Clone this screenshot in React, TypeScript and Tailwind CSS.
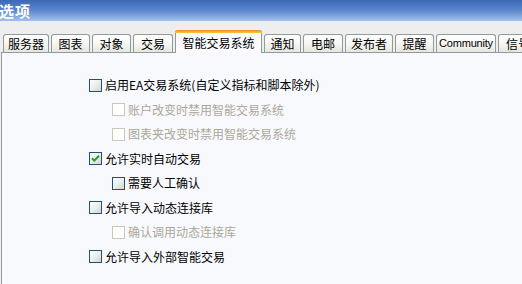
import React from "react";

const tabs = [
  { label: "服务器", w: 46 },
  { label: "图表", w: 39 },
  { label: "对象", w: 39 },
  { label: "交易", w: 40 },
  { label: "智能交易系统", w: 87, active: true },
  { label: "通知", w: 37 },
  { label: "电邮", w: 40 },
  { label: "发布者", w: 48 },
  { label: "提醒", w: 39 },
  { label: "Community", w: 60, latin: true },
  { label: "信号", w: 40 },
];

type Row = { label: string; level: 0 | 1; checked?: boolean; disabled?: boolean };

const rows: Row[] = [
  { label: "启用EA交易系统(自定义指标和脚本除外)", level: 0 },
  { label: "账户改变时禁用智能交易系统", level: 1, disabled: true },
  { label: "图表夹改变时禁用智能交易系统", level: 1, disabled: true },
  { label: "允许实时自动交易", level: 0, checked: true },
  { label: "需要人工确认", level: 1 },
  { label: "允许导入动态连接库", level: 0 },
  { label: "确认调用动态连接库", level: 1, disabled: true },
  { label: "允许导入外部智能交易", level: 0 },
];

function Checkbox({ checked, disabled }: { checked?: boolean; disabled?: boolean }) {
  if (disabled) {
    return <div className="w-[13px] h-[13px] shrink-0 border border-[#cac8bb] bg-white" />;
  }
  return (
    <div className="w-[13px] h-[13px] shrink-0 border border-[#1c5180] bg-gradient-to-br from-[#ffffff] via-[#eeeeea] to-[#d4d4cc] flex items-center justify-center">
      {checked && (
        <svg width="9" height="9" viewBox="0 0 9 9">
          <path d="M1 4.2 L3.3 6.6 L8 1.8" stroke="#21a121" strokeWidth="2" fill="none" />
        </svg>
      )}
    </div>
  );
}

export default function App() {
  const cjk = { fontFamily: '"Noto Sans CJK SC", "Noto Sans", sans-serif' };
  return (
    <div className="w-[522px] h-[284px] overflow-hidden bg-[#eeeeee] flex flex-col" style={cjk}>
      <div className="h-[21px] shrink-0 bg-gradient-to-b from-[#3b68b6] via-[#5d87cc] to-[#a4c1ea] flex items-center">
        <span className="text-white font-bold text-[15px] leading-none ml-[-1px] tracking-[1px]">选项</span>
      </div>
      <div className="h-[1px] bg-[#e8eef8]" />
      <div className="h-[30px] shrink-0 flex items-end pl-[3px] gap-[2px] whitespace-nowrap">
        {tabs.map((t) =>
          t.active ? (
            <div
              key={t.label}
              style={{ width: t.w }}
              className="shrink-0 h-[23px] mb-[-1px] relative z-10 rounded-t-[3px] border-x border-[#919b9c] bg-[#fbfbfd] flex flex-col"
            >
              <div className="h-[3px] rounded-t-[3px] bg-gradient-to-b from-[#e68b2c] to-[#ffc83c] mx-[-1px]" />
              <div className="flex-1 flex items-center justify-center text-[12px] text-black leading-none pb-[1px]">{t.label}</div>
            </div>
          ) : (
            <div
              key={t.label}
              style={{ width: t.w }}
              className="shrink-0 h-[18px] rounded-t-[3px] border border-b-0 border-[#919b9c] bg-gradient-to-b from-white via-[#f6f6f3] to-[#e6e6e0] flex items-center justify-center text-black leading-none overflow-hidden"
            >
              {t.latin ? (
                <span className="font-['Liberation_Sans',sans-serif] text-[11px] tracking-[-0.2px]">{t.label}</span>
              ) : (
                <span className="text-[12px]">{t.label}</span>
              )}
            </div>
          )
        )}
      </div>
      <div className="flex-1 ml-[1px] border-t border-l border-[#919b9c] bg-[#f8f9fd] pt-[20px]">
        <div className="flex flex-col">
          {rows.map((r) => (
            <div
              key={r.label}
              className={`h-[24.5px] flex items-center gap-[3px] ${r.level === 0 ? "pl-[87px]" : "pl-[110px]"}`}
            >
              <Checkbox checked={r.checked} disabled={r.disabled} />
              <span className={`text-[12px] leading-none ${r.disabled ? "text-[#aca899]" : "text-black"}`}>{r.label}</span>
            </div>
          ))}
        </div>
      </div>
    </div>
  );
}
